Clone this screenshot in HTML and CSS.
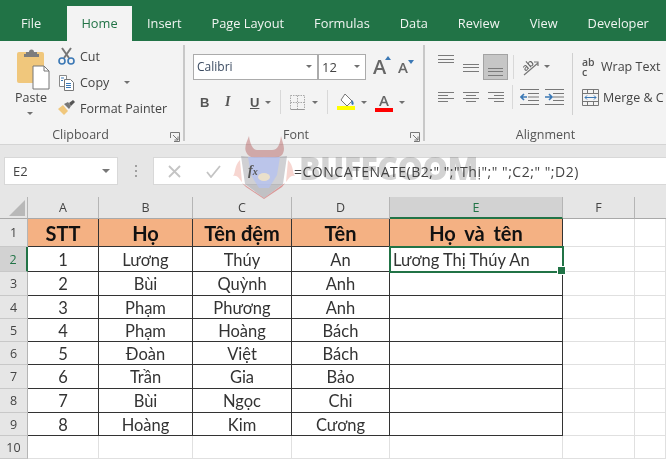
FILE: index.html
```html
<!DOCTYPE html>
<html lang="vi">
<head>
<meta charset="utf-8">
<title>Excel</title>
<link rel="stylesheet" href="styles.css">
</head>
<body>
<div class="app">
  <nav class="tabs">
    <span class="tab tab-file">File</span>
    <span class="tab tab-active">Home</span>
    <span class="tab">Insert</span>
    <span class="tab">Page Layout</span>
    <span class="tab">Formulas</span>
    <span class="tab">Data</span>
    <span class="tab">Review</span>
    <span class="tab">View</span>
    <span class="tab">Developer</span>
  </nav>

  <section class="ribbon">
    <div class="group group-clip">
      <div class="group-body clip-body">
        <div class="paste">
          <svg class="paste-icon" width="33" height="41" viewBox="0 0 33 41"><rect x="0" y="3" width="27" height="31" rx="2" fill="#f0c77c"/><path d="M9 5V3h3a2 2 0 0 1 5 0h3v2h2v3H7V5z" fill="#7d7d7d"/><path d="M16 17h11l5 5v18H16z" fill="#fff" stroke="#777"/><path d="M27 17v5h5" fill="none" stroke="#777"/></svg>
          <span class="paste-label">Paste</span>
          <i class="caret"></i>
        </div>
        <div class="clip-list">
          <div class="clip-item"><svg width="17" height="18" viewBox="0 0 17 18"><path d="M4 1l7 10M13 1L6 11" stroke="#777" stroke-width="2" fill="none"/><circle cx="4" cy="14" r="3" fill="none" stroke="#3b78b5" stroke-width="1.6"/><circle cx="13" cy="14" r="3" fill="none" stroke="#3b78b5" stroke-width="1.6"/></svg><span>Cut</span></div>
          <div class="clip-item"><svg width="17" height="17" viewBox="0 0 17 17"><path d="M1.500 1.500h7v11h-7z" fill="#fff" stroke="#8a8a8a"/><path d="M6.500 5.500h6l3 3v8h-9z" fill="#fff" stroke="#777"/><path d="M3 4h3M3 6.500h2M8 9.500h5M8 11.500h5M8 13.500h5" stroke="#3b78b5"/></svg><span>Copy</span><i class="caret caret-copy"></i></div>
          <div class="clip-item"><svg width="17" height="16" viewBox="0 0 17 16"><path d="M0 9l5-4 5 6-4 4z" fill="#f0c77c"/><path d="M6 4l4-2 3 4-2 3z" fill="#777"/><path d="M11 3l4-3 2 2-4 4z" fill="#555"/></svg><span>Format Painter</span></div>
        </div>
      </div>
      <div class="group-label">Clipboard</div>
      <svg class="launcher" width="10" height="10" viewBox="0 0 10 10"><path d="M.5 6V.5H9.500V9.500H4M3 3l5 5M8 4.500V8H4.500" fill="none" stroke="#777"/></svg>
    </div>

    <div class="group group-font">
      <div class="group-body font-body">
        <div class="font-row-a">
          <div class="select select-font"><span>Calibri</span><i class="caret"></i></div>
          <div class="select select-size"><span>12</span><i class="caret"></i></div>
          <span class="grow">A<i class="tri tri-up"></i></span>
          <span class="shrink">A<i class="tri tri-down"></i></span>
        </div>
        <div class="font-row-b">
          <b class="fmt fmt-b">B</b>
          <i class="fmt fmt-i">I</i>
          <u class="fmt fmt-u">U</u>
          <i class="caret"></i>
          <span class="vsep"></span>
          <svg class="borders" width="15" height="15" viewBox="0 0 15 15"><path d="M.5.500h14v14H.500zM7.500.500v14M.5 7.500h14" fill="none" stroke="#a8a8a8" stroke-dasharray="1.500 1"/><path d="M.5 14.500h14" stroke="#999"/></svg>
          <i class="caret"></i>
          <span class="vsep"></span>
          <svg class="fill" width="18" height="16" viewBox="0 0 18 16"><path d="M8 0l7 7-5 5-6-6z" fill="#fff" stroke="#777"/><path d="M15 6c2 2 2 4 1 5-2 0-2-3-1-5z" fill="#3b78b5"/><rect y="12" width="18" height="4" fill="#ffff00"/></svg>
          <i class="caret"></i>
          <span class="color-a">A</span>
          <i class="caret"></i>
        </div>
      </div>
      <div class="group-label">Font</div>
      <svg class="launcher" width="10" height="10" viewBox="0 0 10 10"><path d="M.5 6V.5H9.500V9.500H4M3 3l5 5M8 4.500V8H4.500" fill="none" stroke="#777"/></svg>
    </div>

    <div class="group group-align">
      <div class="group-body align-body">
        <div class="align-col">
          <div class="align-row">
            <span class="lines lines-top"><i></i><i></i><i></i></span>
            <span class="lines lines-mid"><i></i><i></i><i></i></span>
            <span class="lines-sel"><i></i><i></i><i></i></span>
            <span class="vsep"></span>
            <svg class="orient" width="19" height="18" viewBox="0 0 19 18"><text x="2" y="11" class="orient-text" transform="rotate(-42 7 9)">ab</text><path d="M3 17L17 5M13 4h4v4" fill="none" stroke="#777" stroke-width="1.200"/></svg>
            <i class="caret caret-orient"></i>
          </div>
          <div class="align-row align-row-b">
            <span class="lines lines-l"><i></i><i></i><i></i><i></i></span>
            <span class="lines lines-c"><i></i><i></i><i></i><i></i></span>
            <span class="lines lines-r"><i></i><i></i><i></i><i></i></span>
            <span class="vsep"></span>
            <svg width="19" height="16" viewBox="0 0 19 16"><path d="M0 .5h19M8 4.500h11M8 8h11M8 11.500h11M0 15.500h19" stroke="#777"/><path d="M7 8H1M4 5L1 8l3 3" fill="none" stroke="#3b78b5" stroke-width="1.600"/></svg>
            <svg class="indent" width="19" height="16" viewBox="0 0 19 16"><path d="M0 .5h19M8 4.500h11M8 8h11M8 11.500h11M0 15.500h19" stroke="#777"/><path d="M0 8h6M4 5l3 3-3 3" fill="none" stroke="#3b78b5" stroke-width="1.600"/></svg>
          </div>
        </div>
        <span class="tall-sep"></span>
        <div class="wrap-col">
          <div class="wrap-item"><span class="abc">ab<br>c</span><span>Wrap Text</span></div>
          <div class="wrap-item wrap-merge"><svg width="17" height="17" viewBox="0 0 17 17"><path d="M.5.500h16v16H.500zM.5 4.500h16M.5 12.500h16M5.500.500v4M11.500.500v4M5.500 12.500v4M11.500 12.500v4" fill="none" stroke="#777"/><path d="M3 8.500h11M5 6.500l-2 2 2 2M12 6.500l2 2-2 2" fill="none" stroke="#3b78b5"/></svg><span>Merge &amp; C</span></div>
        </div>
      </div>
      <div class="group-label label-align">Alignment</div>
    </div>
  </section>

  <section class="formula-row">
    <div class="namebox"><span>E2</span><i class="caret caret-dark"></i></div>
    <span class="dots"><i></i><i></i><i></i></span>
    <div class="formula-bar">
      <svg class="fb-btn" width="13" height="13" viewBox="0 0 13 13"><path d="M1 1l11 11M12 1L1 12" stroke="#c4c4c4" stroke-width="1.800"/></svg>
      <svg class="fb-btn fb-check" width="15" height="13" viewBox="0 0 15 13"><path d="M1 7l4 5L14 1" fill="none" stroke="#c4c4c4" stroke-width="1.800"/></svg>
      <span class="fx">f<small>x</small></span>
      <span class="formula-text">=CONCATENATE(B2;" ";"Thị";" ";C2;" ";D2)</span>
    </div>
  </section>

  <section class="sheet">
    <div class="hd corner"><svg width="16" height="16" viewBox="0 0 16 16"><path d="M16 0v16H0z" fill="#b8b8b8"/></svg></div>
    <div class="hd">A</div><div class="hd">B</div><div class="hd">C</div><div class="hd">D</div><div class="hd hd-sel">E</div><div class="hd">F</div><div class="hd hd-end"></div>

    <div class="rh">1</div><div class="t th">STT</div><div class="t th">Họ</div><div class="t th">Tên đệm</div><div class="t th">Tên</div><div class="t th th-e">Họ và tên</div><div class="c"></div><div class="c"></div>
    <div class="rh rh-sel">2</div><div class="t">1</div><div class="t">Lương</div><div class="t">Thúy</div><div class="t">An</div><div class="t active">Lương Thị Thúy An</div><div class="c"></div><div class="c"></div>
    <div class="rh">3</div><div class="t">2</div><div class="t">Bùi</div><div class="t">Quỳnh</div><div class="t">Anh</div><div class="t"></div><div class="c"></div><div class="c"></div>
    <div class="rh">4</div><div class="t">3</div><div class="t">Phạm</div><div class="t">Phương</div><div class="t">Anh</div><div class="t"></div><div class="c"></div><div class="c"></div>
    <div class="rh">5</div><div class="t">4</div><div class="t">Phạm</div><div class="t">Hoàng</div><div class="t">Bách</div><div class="t"></div><div class="c"></div><div class="c"></div>
    <div class="rh">6</div><div class="t">5</div><div class="t">Đoàn</div><div class="t">Việt</div><div class="t">Bách</div><div class="t"></div><div class="c"></div><div class="c"></div>
    <div class="rh">7</div><div class="t">6</div><div class="t">Trần</div><div class="t">Gia</div><div class="t">Bảo</div><div class="t"></div><div class="c"></div><div class="c"></div>
    <div class="rh">8</div><div class="t">7</div><div class="t">Bùi</div><div class="t">Ngọc</div><div class="t">Chi</div><div class="t"></div><div class="c"></div><div class="c"></div>
    <div class="rh">9</div><div class="t">8</div><div class="t">Hoàng</div><div class="t">Kim</div><div class="t">Cương</div><div class="t"></div><div class="c"></div><div class="c"></div>
    <div class="rh">10</div><div class="c"></div><div class="c"></div><div class="c"></div><div class="c"></div><div class="c"></div><div class="c"></div><div class="c"></div>
  </section>

  <div class="watermark">
    <svg width="62" height="64" viewBox="0 0 62 64">
      <path d="M16 0c-3 8-6 13-1 19 4 4 9 3 14 3h6c5 0 10 1 14-3 4-6 1-11-1-19-1 8-3 14-9 14H24C20 14 17 8 16 0z" fill="#b04a4a" opacity=".4"/>
      <path d="M8 20l23 2 23-2-4 28-19 14-19-14z" fill="#8a8a90" opacity=".4"/>
      <path d="M15 21h32l-3 18-8 13h-10l-8-13z" fill="#b4c2f2" opacity=".75"/>
      <path d="M9 47l22 15 21-15-3 4-18 12-18-12z" fill="#d04a4a" opacity=".5"/>
      <path d="M7 24C1 30 3 36 0 40c5-1 6 3 9 6zM55 24c6 6 4 12 7 16-5-1-6 3-9 6z" fill="#e98a7a" opacity=".35"/>
      <ellipse cx="31" cy="41" rx="6" ry="4" fill="#f0e2c8" opacity=".9"/>
    </svg>
    <span class="wm-text">BUFFCOOM</span>
  </div>
</div>
</body>
</html>
```
FILE: styles.css
```css
* { box-sizing: border-box; }
html, body { margin: 0; padding: 0; }
body { width: 666px; height: 460px; overflow: hidden; background: #e6e6e6; }
i { font-style: normal; }

.app {
  position: relative;
  width: 666px;
  height: 460px;
  overflow: hidden;
  display: flex;
  flex-direction: column;
  font-family: "Open Sans", "Noto Sans", sans-serif;
  color: #444;
  filter: blur(0.35px);
}

/* Tabs */
.tabs {
  height: 41px;
  flex: none;
  display: flex;
  align-items: stretch;
  padding: 6px 0 0 6px;
  background: #217346;
  color: #f0f4f1;
  font-size: 12.8px;
  line-height: 34px;
}
.tab { flex: none; padding: 0 15px; white-space: nowrap; }
.tab-file { width: 61px; }
.tab-active { background: #f3f3f3; color: #217346; padding: 0; width: 65px; text-align: center; }

/* Ribbon */
.ribbon {
  height: 104px;
  flex: none;
  display: flex;
  background: #f3f3f3;
  border-bottom: 1px solid #d4d4d4;
  font-size: 12.5px;
}
.group {
  position: relative;
  display: flex;
  flex-direction: column;
  margin-top: 4px;
  height: 96px;
  border-right: 2px solid #c8c8c8;
}
.group-body { flex: 1; min-height: 0; }
.group-label { flex: none; text-align: center; height: 20px; line-height: 20px; margin-bottom: -4px; font-size: 12.5px; color: #555; }
.launcher { position: absolute; right: 3px; bottom: -1px; }
.caret {
  display: inline-block;
  flex: none;
  width: 0; height: 0;
  border-left: 3.5px solid transparent;
  border-right: 3.5px solid transparent;
  border-top: 3.5px solid #707070;
}
.caret-dark { border-left-width: 4.5px; border-right-width: 4.5px; border-top-width: 4.5px; border-top-color: #777; }

.group-clip { flex: none; width: 185px; }
.group-clip .group-label { padding-right: 22px; }
.clip-body { display: flex; padding-left: 17px; }
.paste { width: 41px; display: flex; flex-direction: column; align-items: flex-start; padding-top: 4px; }
.paste-label { margin-left: -2px; line-height: 16px; font-size: 12.5px; }
.paste .caret { margin: 6px 0 0 10px; }
.clip-list { display: flex; flex-direction: column; gap: 8px; padding-top: 2px; }
.clip-item { display: flex; align-items: center; gap: 5px; height: 18px; white-space: nowrap; }
.clip-item svg { flex: none; }
.caret-copy { margin-left: 10px; }

/* Font group */
.group-font { flex: none; width: 240px; }
.group-font .group-label { margin-left: -16px; }
.font-body { padding: 8px 0 0 8px; }
.font-row-a { display: flex; align-items: center; }
.select {
  height: 26px;
  display: flex;
  align-items: center;
  justify-content: space-between;
  background: #fff;
  border: 1px solid #ababab;
  padding: 0 5px 0 3px;
  font-size: 12px;
  color: #3a4a60;
}
.select-font { width: 125px; }
.select-size { width: 48px; font-size: 13px; color: #444; }
.grow, .shrink { position: relative; font-weight: 600; color: #666; }
.grow { font-size: 20px; margin-left: 7px; width: 25px; }
.shrink { font-size: 15px; width: 20px; }
.tri { position: absolute; top: 3px; width: 0; height: 0; border-left: 3px solid transparent; border-right: 3px solid transparent; }
.tri-up { left: 12px; border-bottom: 4px solid #3b78b5; }
.tri-down { left: 10px; border-top: 4px solid #3b78b5; }

.font-row-b { display: flex; align-items: center; height: 20px; margin-top: 12px; padding-left: 7px; }
.fmt { width: 25px; text-align: left; font-size: 13px; color: #555; font-weight: 700; font-family: "Liberation Sans", sans-serif; }
.fmt-i { font-style: italic; font-family: "Liberation Serif", serif; font-size: 14px; }
.fmt-u { width: 15px; }
.vsep { display: block; width: 1px; height: 24px; background: #d8d8d8; flex: none; }
.font-row-b .vsep { margin: 0 9px; }
.borders { margin-right: 7px; }
.fill { margin-right: 6px; }
.color-a {
  width: 18px;
  margin-left: 8px;
  margin-right: 6px;
  text-align: center;
  font-size: 15px;
  line-height: 16px;
  font-weight: 600;
  color: #666;
  border-bottom: 4px solid #ff0000;
}

/* Alignment group */
.group-align { flex: 1; min-width: 0; border-right: 0; }
.align-body { display: flex; padding: 8px 0 0 13px; }
.align-col { flex: none; width: 134px; }
.align-row { display: flex; align-items: center; height: 27px; }
.align-row-b { margin-top: 7px; height: 20px; }
.lines { display: flex; flex-direction: column; gap: 2.5px; width: 25px; }
.lines i { display: block; width: 16px; height: 1px; background: #7a7a7a; }
.lines-top { align-self: flex-start; padding-top: 2px; }
.lines-mid { padding-top: 2px; width: 20px; }
.lines-sel {
  width: 25px; height: 26px;
  display: flex; flex-direction: column; justify-content: flex-end; align-items: center; gap: 2.5px;
  padding-bottom: 3px;
  background: #c6c6c6;
  border: 1px solid #a3a3a3;
}
.lines-sel i { display: block; width: 15px; height: 1px; background: #7a7a7a; }
.align-row .vsep { margin: 0 7px 0 5px; }
.lines-l i:nth-child(even) { width: 10px; }
.lines-c i:nth-child(even) { width: 10px; margin-left: 3px; }
.lines-r { width: 24px; }
.lines-r i:nth-child(even) { width: 10px; margin-left: 6px; }
.lines-l, .lines-c, .lines-r { gap: 2px; }
.align-row-b .lines-r + .vsep { margin-left: 0; }
.orient { flex: none; }
.orient-text { font-size: 10px; fill: #666; font-weight: 600; }
.caret-orient { margin-left: 4px; }
.indent { margin-left: 6px; }
.tall-sep { width: 1px; height: 62px; background: #d0d0d0; flex: none; }
.wrap-col { padding-left: 9px; white-space: nowrap; }
.wrap-item { display: flex; align-items: center; gap: 3px; height: 27px; font-size: 12.5px; }
.wrap-merge { gap: 4px; margin-top: 7px; height: 20px; }
.abc { font-size: 10.5px; line-height: 10px; width: 16px; color: #555; font-weight: 600; }

/* Formula row */
.formula-row {
  height: 52px;
  flex: none;
  display: flex;
  align-items: flex-start;
  padding: 12px 0 0 4px;
  background: #e6e6e6;
}
.namebox {
  width: 114px; height: 28px;
  display: flex; align-items: center; justify-content: space-between;
  padding: 0 7px 0 8px;
  background: #fff;
  border: 1px solid #d8d8d8;
  font-size: 13px;
  color: #444;
}
.dots { width: 35px; height: 28px; display: flex; flex-direction: column; align-items: center; justify-content: center; gap: 3px; }
.dots i { display: block; width: 2px; height: 2px; background: #a0a0a0; }
.formula-bar {
  flex: 1; height: 28px;
  display: flex; align-items: center;
  padding-left: 14px;
  background: #fff;
  border: 1px solid #d8d8d8;
  border-right: 0;
}
.fb-check { margin-left: 25px; }
.fx { position: relative; z-index: 2; flex: none; margin-left: 25px; width: 48px; padding-left: 2px; font-family: "Liberation Serif", serif; font-style: italic; font-weight: 700; font-size: 14px; color: #555; }
.fx small { font-size: 10px; }
.formula-text { position: relative; z-index: 2; font-size: 14px; letter-spacing: 0.52px; color: #444; white-space: nowrap; }

/* Sheet */
.sheet {
  flex: 1;
  display: grid;
  grid-template-columns: 28px 71px 94px 99px 98px 173px 72px 31px;
  grid-template-rows: 22px 28px 25px 24px 23px 23px 23px 24px 24px 23px 23px 2px;
  background: #fff;
  font-family: "Lato", "Open Sans", sans-serif;
  font-size: 16.5px;
  color: #333;
}
.hd {
  display: flex; align-items: center; justify-content: center;
  background: #e6e6e6;
  border-right: 1px solid #b5b5b5;
  border-bottom: 1px solid #a9a9a9;
  font-family: "Open Sans", sans-serif;
  font-size: 12.5px;
  color: #444;
}
.corner { align-items: flex-end; justify-content: flex-end; padding: 0 2px 2px 0; }
.hd-sel { background: #d2d2d2; color: #217346; border-bottom: 2px solid #217346; }
.hd-end { border-right: 0; }
.rh {
  display: flex; align-items: center; justify-content: center;
  background: #e6e6e6;
  border-right: 1px solid #b5b5b5;
  border-bottom: 1px solid #c8c8c8;
  font-family: "Open Sans", sans-serif;
  font-size: 12.5px;
  color: #444;
}
.rh-sel { background: #d2d2d2; color: #217346; border-right: 2px solid #217346; }
.c { background: #fff; border-right: 1px solid #e0e0e0; border-bottom: 1px solid #e0e0e0; }
.t {
  display: flex; align-items: center; justify-content: center;
  border-right: 1px solid #333;
  border-bottom: 1px solid #333;
  white-space: nowrap;
  padding-top: 1px;
}
.th { background: #f4b183; font-weight: 700; font-size: 20px; color: #111; padding-top: 0; }
.th-e { border-bottom: 0; word-spacing: 4px; }
.active {
  position: relative;
  justify-content: flex-start;
  padding-left: 3px;
  outline: 2px solid #217346;
  outline-offset: -1px;
  z-index: 1;
}
.active::after {
  content: "";
  position: absolute;
  right: -4px;
  bottom: -4px;
  width: 7px;
  height: 7px;
  background: #217346;
  border: 1px solid #fff;
}

/* Watermark */
.watermark {
  position: absolute;
  left: 233px;
  top: 136px;
  display: flex;
  align-items: center;
  pointer-events: none;
}
.wm-text {
  margin: 0 0 2px 4px;
  font-weight: 800;
  font-size: 32px;
  letter-spacing: -0.5px;
  color: rgba(110, 110, 110, 0.3);
}
```
